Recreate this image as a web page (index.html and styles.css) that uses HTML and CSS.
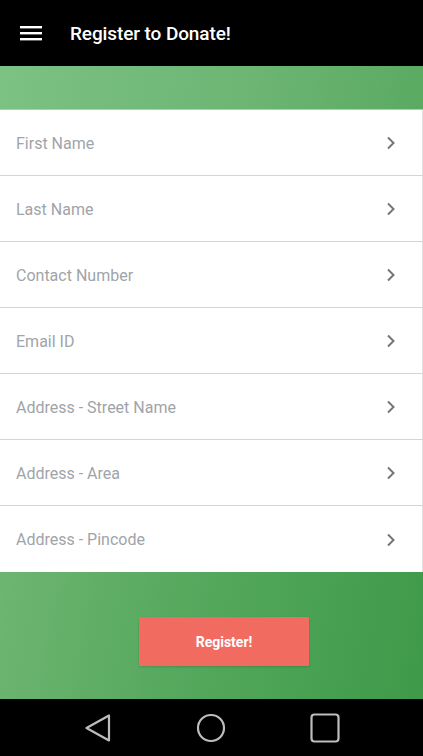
FILE: index.html
```html
<!DOCTYPE html>
<html>
<head>
<meta charset="utf-8">
<link rel="stylesheet" href="styles.css">
</head>
<body>
<div class="screen">
  <header class="appbar">
    <svg class="menu" width="22" height="16" viewBox="0 0 22 16">
      <rect x="0" y="1" width="22" height="2.4" fill="#fff"/>
      <rect x="0" y="7" width="22" height="2.4" fill="#fff"/>
      <rect x="0" y="13" width="22" height="2.4" fill="#fff"/>
    </svg>
    <span class="title">Register to Donate!</span>
  </header>
  <div class="band"></div>
  <ul class="form">
    <li class="row"><span>First Name</span><svg class="chev" width="10" height="14" viewBox="0 0 10 14"><path d="M2 1.5 L7.5 7 L2 12.5" fill="none" stroke="#757575" stroke-width="2"/></svg></li>
    <li class="row"><span>Last Name</span><svg class="chev" width="10" height="14" viewBox="0 0 10 14"><path d="M2 1.5 L7.5 7 L2 12.5" fill="none" stroke="#757575" stroke-width="2"/></svg></li>
    <li class="row"><span>Contact Number</span><svg class="chev" width="10" height="14" viewBox="0 0 10 14"><path d="M2 1.5 L7.5 7 L2 12.5" fill="none" stroke="#757575" stroke-width="2"/></svg></li>
    <li class="row"><span>Email ID</span><svg class="chev" width="10" height="14" viewBox="0 0 10 14"><path d="M2 1.5 L7.5 7 L2 12.5" fill="none" stroke="#757575" stroke-width="2"/></svg></li>
    <li class="row"><span>Address - Street Name</span><svg class="chev" width="10" height="14" viewBox="0 0 10 14"><path d="M2 1.5 L7.5 7 L2 12.5" fill="none" stroke="#757575" stroke-width="2"/></svg></li>
    <li class="row"><span>Address - Area</span><svg class="chev" width="10" height="14" viewBox="0 0 10 14"><path d="M2 1.5 L7.5 7 L2 12.5" fill="none" stroke="#757575" stroke-width="2"/></svg></li>
    <li class="row"><span>Address - Pincode</span><svg class="chev" width="10" height="14" viewBox="0 0 10 14"><path d="M2 1.5 L7.5 7 L2 12.5" fill="none" stroke="#757575" stroke-width="2"/></svg></li>
  </ul>
  <div class="footer">
    <button class="btn">Register!</button>
  </div>
  <nav class="navbar">
    <svg width="28" height="30" viewBox="0 0 28 30"><path d="M25 2.5 L25 27.5 L2.5 15 Z" fill="none" stroke="#bdbdbd" stroke-width="2.2" stroke-linejoin="round"/></svg>
    <svg width="30" height="30" viewBox="0 0 30 30"><circle cx="15" cy="15" r="13" fill="none" stroke="#bdbdbd" stroke-width="2.2"/></svg>
    <svg width="30" height="30" viewBox="0 0 30 30"><rect x="1.5" y="1.5" width="27" height="27" rx="3" fill="none" stroke="#bdbdbd" stroke-width="2.2"/></svg>
  </nav>
</div>
</body>
</html>
```
FILE: styles.css
```css
* { box-sizing: border-box; }
html, body { margin: 0; padding: 0; }
body { width: 423px; height: 756px; overflow: hidden; font-family: Roboto, "Liberation Sans", sans-serif; background: #fff; }
.screen { display: flex; flex-direction: column; height: 756px; }
.appbar { height: 66px; background: #000; display: flex; align-items: center; padding-left: 20px; flex: none; }
.menu { margin-right: 28px; }
.title { color: #fff; font-size: 19px; font-weight: 500; letter-spacing: -0.1px; }
.band { height: 44px; flex: none; background: linear-gradient(100deg, #7cc283 0%, #6cb573 60%, #5aaa62 100%); border-bottom: 1px solid #a5d6a7; }
.form { list-style: none; margin: 0; padding: 0; flex: none; }
.row { height: 66px; display: flex; align-items: center; justify-content: space-between; padding: 1px 26px 0 16px; background: #fff; border-bottom: 1px solid #d2d6d2; border-right: 1px solid #e0e0e0; color: #9fa4a9; font-size: 16px; }
.row:last-child { border-bottom: none; }
.chev { margin-top: 0; }
.footer { flex: 1; display: flex; justify-content: center; align-items: flex-start; padding-top: 45px; padding-left: 25px; background: linear-gradient(100deg, #6db571 0%, #55a85d 45%, #3e9a49 100%); }
.btn { width: 170px; height: 49px; border: none; background: #f26b61; color: #fff; font-family: Roboto, "Liberation Sans", sans-serif; font-weight: 700; font-size: 14px; padding: 0; box-shadow: 0 1px 2px rgba(0,0,0,0.15); }
.navbar { height: 57px; flex: none; background: #000; display: flex; align-items: center; justify-content: center; gap: 84px; padding-left: 0; }
```
